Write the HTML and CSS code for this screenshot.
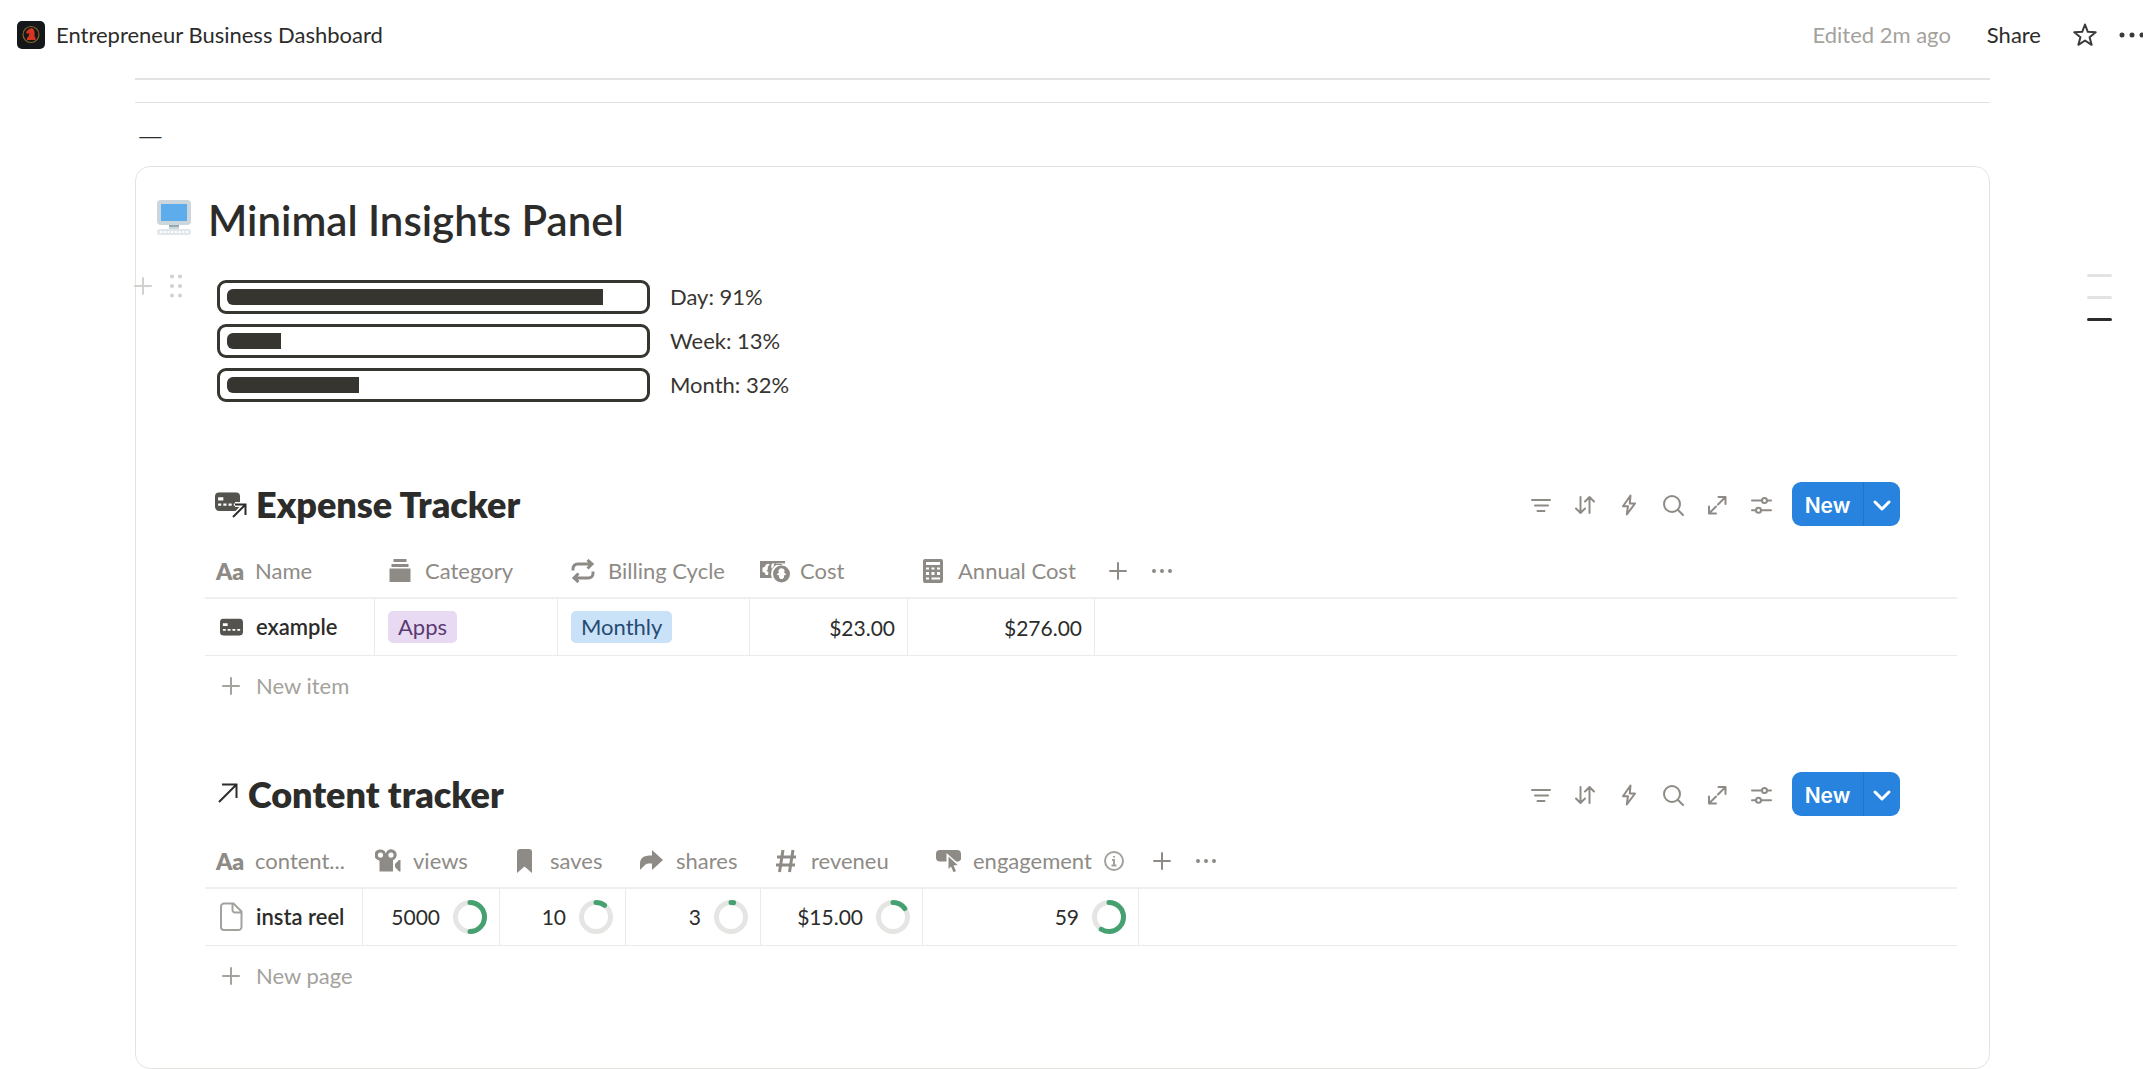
FILE: index.html
```html
<!DOCTYPE html>
<html lang="en">
<head>
  <meta charset="UTF-8" />
  <meta name="viewport" content="width=device-width, initial-scale=1.0"/>
  <title>Entrepreneur Business Dashboard</title>
  <link rel="stylesheet" href="styles.css">
</head>
<body>
  <svg class="sprite" aria-hidden="true">
    <symbol id="i-filter" viewBox="0 0 24 24"><path d="M3 7h18M6 12.500h13M8.500 18h7"/></symbol>
    <symbol id="i-sort" viewBox="0 0 24 24"><path d="M7.500 4v16M3 15.500l4.500 4.500 4.500-4.500M16.500 20V4M12 8.500L16.500 4l4.500 4.500"/></symbol>
    <symbol id="i-bolt" viewBox="0 0 24 24"><path d="M13.500 2.500L6 13.200h5L9.800 21.500 18 10.500h-5.200z"/></symbol>
    <symbol id="i-search" viewBox="0 0 24 24"><circle cx="11" cy="11" r="8"/><path d="M17 17l5 5"/></symbol>
    <symbol id="i-expand" viewBox="0 0 24 24"><path d="M13.500 4h7v7M20.500 4l-7.500 7.500M4 13.500v7h7M4 20.500l7-7"/></symbol>
    <symbol id="i-sliders" viewBox="0 0 24 24"><path d="M3 7.500h10M18 7.500h4M3 17.300h4M12 17.300h10"/><circle cx="15.500" cy="7.500" r="2.500"/><circle cx="9.500" cy="17.300" r="2.500"/></symbol>
    <symbol id="i-chevron" viewBox="0 0 20 20"><path d="M3 7l7 7 7-7"/></symbol>
    <symbol id="i-plus" viewBox="0 0 20 20"><path d="M10 2v16M2 10h16"/></symbol>
    <symbol id="i-dots" viewBox="0 0 22 20"><circle cx="3" cy="10" r="2"/><circle cx="11" cy="10" r="2"/><circle cx="19" cy="10" r="2"/></symbol>
    <symbol id="i-card" viewBox="0 0 24 18"><path fill-rule="evenodd" d="M4 0h16a4 4 0 0 1 4 4v10a4 4 0 0 1-4 4H4a4 4 0 0 1-4-4V4a4 4 0 0 1 4-4zM3 5v3h5V5zM3 11v2h3v-2zM8 11v2h3v-2zM13 11v2h3v-2zM18 11v2h3v-2z"/></symbol>
  </svg>

  <header class="topbar">
    <a class="page-link" href="#">
      <svg class="page-logo" viewBox="0 0 28 28" aria-hidden="true">
        <rect width="28" height="28" rx="5" fill="#14181a"/>
        <circle cx="14" cy="13.500" r="8" fill="none" stroke="#8a6420" stroke-width="1.200"/>
        <path d="M10 19v-2l1.500-1.500 1-3.500-2.500 1-1-2 2.500-2.500L14.500 7c3 1 3.500 4 3 8.500l1 1.500v2z" fill="#d8341f"/>
      </svg>
      Entrepreneur Business Dashboard
    </a>
    <div class="top-actions">
      <span class="edited">Edited 2m ago</span>
      <button class="share" type="button">Share</button>
      <button class="star" type="button" aria-label="Favorite">
        <svg viewBox="0 0 24 24"><path d="M12 1.500l2.800 7.300 7.900.4-6.100 5 2 7.600L12 17.500l-6.600 4.300 2-7.600-6.100-5 7.900-.4z"/></svg>
      </button>
      <button class="more" type="button" aria-label="More">
        <svg viewBox="0 0 26 20"><circle cx="5" cy="10" r="2.500"/><circle cx="15" cy="10" r="2.500"/><circle cx="25" cy="10" r="2.500"/></svg>
      </button>
    </div>
  </header>

  <div class="page">
    <main>
      <hr class="rule thick">
      <hr class="rule">
      <p class="dash">—</p>

      <section class="panel">
        <div class="handles">
          <button type="button" aria-label="Add block"><svg class="icon-plus" viewBox="0 0 20 20"><use href="#i-plus"/></svg></button>
          <button type="button" aria-label="Drag block">
            <svg class="icon-grip" viewBox="0 0 14 24"><circle cx="3" cy="2.500" r="2"/><circle cx="11" cy="2.500" r="2"/><circle cx="3" cy="12" r="2"/><circle cx="11" cy="12" r="2"/><circle cx="3" cy="21.500" r="2"/><circle cx="11" cy="21.500" r="2"/></svg>
          </button>
        </div>

        <h1 class="panel-title">
          <svg class="computer" viewBox="0 0 34 36" aria-hidden="true">
            <rect x="0" y="0" width="34" height="25" rx="4" fill="#ccd6dd"/>
            <rect x="4" y="4" width="26" height="17" fill="#5dadec"/>
            <rect x="12" y="25" width="10" height="3" fill="#9aaab4"/>
            <path d="M12 27h10v2H12z" fill="#ccd6dd"/>
            <rect x="0" y="29" width="34" height="6" rx="2.500" fill="#e1e8ed"/>
            <path d="M3 32h28" stroke="#fff" stroke-width="2" stroke-dasharray="2 1.700"/>
          </svg>
          Minimal Insights Panel
        </h1>

        <div class="content">
          <div class="bars">
            <div class="bar-row"><div class="bar"><div class="fill" style="width:91%"></div></div><span>Day: 91%</span></div>
            <div class="bar-row"><div class="bar"><div class="fill" style="width:13%"></div></div><span>Week: 13%</span></div>
            <div class="bar-row"><div class="bar"><div class="fill" style="width:32%"></div></div><span>Month: 32%</span></div>
          </div>

          <section class="tracker">
            <div class="tracker-head">
              <h2>
                <svg class="card-link" viewBox="0 0 32 28" aria-hidden="true">
                  <svg y="2" width="25" height="19" viewBox="0 0 24 18"><use href="#i-card"/></svg>
                  <path class="halo" d="M18 27L30 15M20 14.500h10.500V25"/>
                  <path class="arrow" d="M18 27L30 15M20 14.500h10.500V25"/>
                </svg>
                Expense Tracker
              </h2>
              <div class="tools">
                <button type="button" aria-label="Filter"><svg><use href="#i-filter"/></svg></button>
                <button type="button" aria-label="Sort"><svg><use href="#i-sort"/></svg></button>
                <button type="button" aria-label="Automations"><svg><use href="#i-bolt"/></svg></button>
                <button type="button" aria-label="Search"><svg><use href="#i-search"/></svg></button>
                <button type="button" aria-label="Open full page"><svg><use href="#i-expand"/></svg></button>
                <button type="button" aria-label="View settings"><svg><use href="#i-sliders"/></svg></button>
              </div>
              <div class="new-btn">
                <button class="new" type="button">New</button>
                <button class="new-menu" type="button" aria-label="New options"><svg><use href="#i-chevron"/></svg></button>
              </div>
            </div>

            <table class="expenses">
              <thead>
                <tr>
                  <th><div class="th"><span class="ico aa">Aa</span>Name</div></th>
                  <th><div class="th"><span class="ico"><svg viewBox="0 0 24 24"><path d="M5.500 0h13v3h-13zM3.500 5h17v3h-17zM1.500 9.500h21v13.500h-21z"/></svg></span>Category</div></th>
                  <th><div class="th"><span class="ico"><svg class="line" viewBox="0 0 24 24"><path d="M2 11.500V9.500a4.500 4.500 0 0 1 4.500-4.500H21M16.500 1L21 5l-4.500 4.500M22 12.500v2a4.500 4.500 0 0 1-4.500 4.500H3M7.500 14.500L3 19l4.500 4"/></svg></span>Billing Cycle</div></th>
                  <th>
                    <div class="th"><span class="ico"><svg class="wide" viewBox="0 0 30 24">
                      <path d="M0 2h25v17H0z"/>
                      <path class="cut" d="M7 5h3c-2 2-2.500 3.500-2.200 5.500L6.500 12l2 1-.5 3H5.500c0-2-1-3-3-3V8.500c2 0 3-1 3-2.500zM12 4.500h3L12 10l-1-2.500zM16 4.500h9v3h-9z"/>
                      <circle class="cut" cx="21.500" cy="15" r="10.500"/>
                      <path d="M14 5h11v1H14z"/>
                      <path class="cut" d="M22 5h3v3h-3z"/>
                      <circle cx="21.500" cy="15" r="8.500"/>
                      <path class="cut" d="M19 10.500a3.500 3.500 0 0 1 5 0c1 1.500.5 2.500 0 3l2.500 2-2.500 1v2l-1.500 1.500h-2L19 18.500v-2l-2.500-1 2.500-2c-1-1-.5-2 0-3z"/>
                    </svg></span>Cost</div>
                  </th>
                  <th><div class="th"><span class="ico"><svg viewBox="0 0 24 24"><path fill-rule="evenodd" d="M4 0h16a2 2 0 0 1 2 2v20a2 2 0 0 1-2 2H4a2 2 0 0 1-2-2V2a2 2 0 0 1 2-2zM5 3v3h14V3zM5 8.500v2h3v-2zM10.500 8.500v2h3v-2zM16 8.500v2h3v-2zM5 13v3h3v-3zM10.500 13v3h3v-3zM16 13v3h3v-3zM5 18.500v2h3v-2zM10.500 18.500v2H19v-2z"/></svg></span>Annual Cost</div></th>
                  <th>
                    <div class="th-end">
                      <button type="button" aria-label="Add property"><svg class="icon-plus"><use href="#i-plus"/></svg></button>
                      <button type="button" aria-label="More properties"><svg class="icon-dots"><use href="#i-dots"/></svg></button>
                    </div>
                  </th>
                </tr>
              </thead>
              <tbody>
                <tr>
                  <td><div class="name"><span class="ico"><svg class="card" viewBox="0 0 24 18"><use href="#i-card"/></svg></span><a href="#">example</a></div></td>
                  <td><span class="tag purple">Apps</span></td>
                  <td><span class="tag blue">Monthly</span></td>
                  <td class="num">$23.00</td>
                  <td class="num">$276.00</td>
                  <td></td>
                </tr>
              </tbody>
            </table>
            <button class="new-row" type="button"><span class="ico"><svg class="icon-plus"><use href="#i-plus"/></svg></span>New item</button>
          </section>

          <section class="tracker">
            <div class="tracker-head">
              <h2>
                <svg class="arrow-link" viewBox="0 0 24 24" aria-hidden="true"><path class="arrow" d="M4 20L21 3M7 2.500h14.500V16"/></svg>
                Content tracker
              </h2>
              <div class="tools">
                <button type="button" aria-label="Filter"><svg><use href="#i-filter"/></svg></button>
                <button type="button" aria-label="Sort"><svg><use href="#i-sort"/></svg></button>
                <button type="button" aria-label="Automations"><svg><use href="#i-bolt"/></svg></button>
                <button type="button" aria-label="Search"><svg><use href="#i-search"/></svg></button>
                <button type="button" aria-label="Open full page"><svg><use href="#i-expand"/></svg></button>
                <button type="button" aria-label="View settings"><svg><use href="#i-sliders"/></svg></button>
              </div>
              <div class="new-btn">
                <button class="new" type="button">New</button>
                <button class="new-menu" type="button" aria-label="New options"><svg><use href="#i-chevron"/></svg></button>
              </div>
            </div>

            <table class="posts">
              <thead>
                <tr>
                  <th><div class="th"><span class="ico aa">Aa</span>content...</div></th>
                  <th><div class="th"><span class="ico"><svg class="full" viewBox="0 0 26 24"><path fill-rule="evenodd" d="M5.500 0.500a5.500 5.500 0 0 1 5.300 4 5.500 5.500 0 1 1 7.200 6.500V22.500H4.500V11.500a5.500 5.500 0 0 1 1-11zM5.500 3.500a2.600 2.600 0 1 0 0 5.200 2.600 2.600 0 0 0 0-5.200zM16 3.500a2.600 2.600 0 1 0 0 5.200 2.600 2.600 0 0 0 0-5.200z"/><path d="M25.500 11v11.500H24L20 18v-3l4-4z"/></svg></span>views</div></th>
                  <th><div class="th"><span class="ico"><svg viewBox="0 0 24 24"><path d="M6.500 0h9.500a3 3 0 0 1 3 3v21l-7.500-6.500L4 24V3a3 3 0 0 1 2.500-3z"/></svg></span>saves</div></th>
                  <th><div class="th"><span class="ico"><svg viewBox="0 0 24 24"><path d="M13 1l11 10-11 10v-6.500c-4 0-5.500 0-7 1.500-1.500 1.200-3 3-4.500 4.500H1V15C1 9 4 6.500 13 6.500z"/></svg></span>shares</div></th>
                  <th><div class="th"><span class="ico"><svg class="line" viewBox="0 0 24 24"><path d="M9 1L5.500 23M19 1l-3.500 22M3 8h19M2 16h19"/></svg></span>reveneu</div></th>
                  <th>
                    <div class="th"><span class="ico"><svg class="full" viewBox="0 0 26 24"><rect x="1" y="1" width="25" height="11.500" rx="4"/><path class="cut" d="M11.500 4l14.500 13-4 9H11.500z"/><path d="M18 8h8a4 4 0 0 1-3.500 4.500z"/><path d="M13.500 7.500l9 8.500-4 .5 2.500 5.500-2.500 1.200-2.500-5.700-2.500 2.500z"/></svg></span>engagement
                      <svg class="info" viewBox="0 0 20 20"><circle cx="10" cy="10" r="9"/><path d="M10 5v1.500M8 9h2v5.500M7.500 14.500h5"/></svg>
                    </div>
                  </th>
                  <th>
                    <div class="th-end">
                      <button type="button" aria-label="Add property"><svg class="icon-plus"><use href="#i-plus"/></svg></button>
                      <button type="button" aria-label="More properties"><svg class="icon-dots"><use href="#i-dots"/></svg></button>
                    </div>
                  </th>
                </tr>
              </thead>
              <tbody>
                <tr>
                  <td><div class="name"><span class="ico"><svg class="file" viewBox="0 0 24 30"><path d="M5 1.500h9.500l8 8V25a3 3 0 0 1-3 3H5a3 3 0 0 1-3-3V4.500a3 3 0 0 1 3-3zM13.500 2v6a2.500 2.500 0 0 0 2.500 2.500h6"/></svg></span><a href="#">insta reel</a></div></td>
                  <td><div class="ring-cell">5000<svg class="ring" viewBox="0 0 34 34"><circle cx="17" cy="17" r="14.500"/><circle class="value" cx="17" cy="17" r="14.500" pathLength="100" stroke-dasharray="50 100"/></svg></div></td>
                  <td><div class="ring-cell">10<svg class="ring" viewBox="0 0 34 34"><circle cx="17" cy="17" r="14.500"/><circle class="value" cx="17" cy="17" r="14.500" pathLength="100" stroke-dasharray="10 100"/></svg></div></td>
                  <td><div class="ring-cell">3<svg class="ring" viewBox="0 0 34 34"><circle cx="17" cy="17" r="14.500"/><circle class="value" cx="17" cy="17" r="14.500" pathLength="100" stroke-dasharray="3 100"/></svg></div></td>
                  <td><div class="ring-cell">$15.00<svg class="ring" viewBox="0 0 34 34"><circle cx="17" cy="17" r="14.500"/><circle class="value" cx="17" cy="17" r="14.500" pathLength="100" stroke-dasharray="15 100"/></svg></div></td>
                  <td><div class="ring-cell">59<svg class="ring" viewBox="0 0 34 34"><circle cx="17" cy="17" r="14.500"/><circle class="value" cx="17" cy="17" r="14.500" pathLength="100" stroke-dasharray="59 100"/></svg></div></td>
                  <td></td>
                </tr>
              </tbody>
            </table>
            <button class="new-row" type="button"><span class="ico"><svg class="icon-plus"><use href="#i-plus"/></svg></span>New page</button>
          </section>
        </div>
      </section>
    </main>

    <nav class="toc" aria-label="Table of contents">
      <a href="#" aria-label="Section 1"></a>
      <a href="#" aria-label="Section 2"></a>
      <a class="active" href="#" aria-label="Section 3"></a>
    </nav>
  </div>
</body>
</html>
```
FILE: styles.css
```css
* {
  box-sizing: border-box;
}
body {
  margin: 0;
  font-family: Lato, "Open Sans", sans-serif;
  font-size: 22px;
  line-height: 32px;
  color: #2c2c2b;
  background: #fff;
}
a {
  color: inherit;
  text-decoration: none;
}
button {
  display: flex;
  align-items: center;
  justify-content: center;
  padding: 0;
  border: 0;
  background: none;
  font: inherit;
  color: inherit;
  cursor: pointer;
}
svg {
  display: block;
  flex: none;
}
h1, h2, p {
  margin: 0;
}
.sprite {
  position: absolute;
  width: 0;
  height: 0;
}

/* top bar */
.topbar {
  display: flex;
  align-items: center;
  justify-content: space-between;
  height: 70px;
  padding-left: 17px;
}
.page-link {
  display: flex;
  align-items: center;
  gap: 11px;
}
.page-logo {
  width: 28px;
  height: 28px;
}
.top-actions {
  display: flex;
  align-items: center;
}
.edited {
  color: #a4a29d;
  margin-right: 36px;
}
.share {
  margin-right: 32px;
}
.star {
  margin-right: 20px;
}
.star svg {
  width: 24px;
  height: 24px;
  fill: none;
  stroke: #3b3a38;
  stroke-width: 2;
  stroke-linejoin: round;
}
.more svg {
  width: 26px;
  height: 20px;
  fill: #3b3a38;
}

/* page */
.page {
  display: grid;
  grid-template-columns: minmax(0, 1fr) 153px;
  padding: 8px 0 0 135px;
}
.rule {
  height: 1px;
  margin: 0;
  border: 0;
  background: #e3e3e1;
}
.rule.thick {
  height: 2px;
  margin-bottom: 22px;
}
.dash {
  padding: 15px 2px 16px;
  font-size: 34px;
  font-weight: 300;
}
.panel {
  position: relative;
  padding: 25px 32px 62px 21px;
  border: 1px solid #e3e3e1;
  border-radius: 15px;
}
.panel-title {
  display: flex;
  align-items: center;
  gap: 17px;
  font-size: 42px;
  font-weight: 600;
  line-height: 56px;
}
.computer {
  width: 34px;
  height: 36px;
  margin-bottom: 4px;
}
.handles {
  position: absolute;
  left: -3px;
  top: 107px;
  display: flex;
  align-items: center;
  gap: 16px;
  color: #d3d1cd;
}
.content {
  padding-left: 48px;
}

/* progress bars */
.bars {
  display: flex;
  flex-direction: column;
  gap: 10px;
  padding: 32px 0 0 12px;
}
.bar-row {
  display: flex;
  align-items: center;
  gap: 20px;
  height: 34px;
  color: #373530;
}
.bar {
  width: 433px;
  padding: 6px 7px;
  border: 3px solid #373530;
  border-radius: 9px;
}
.fill {
  height: 16px;
  background: #373530;
  border-radius: 6px 0 0 6px;
}

/* trackers */
.tracker {
  padding-top: 80px;
}
.tracker + .tracker {
  padding-top: 56px;
}
.tracker-head {
  display: flex;
  align-items: center;
  height: 44px;
  margin: 0 57px 22px 10px;
}
h2 {
  display: flex;
  align-items: center;
  gap: 9px;
  margin-right: auto;
  font-size: 36px;
  font-weight: 800;
  line-height: 44px;
}
.card-link {
  width: 32px;
  height: 28px;
  fill: #55534e;
}
.arrow-link {
  width: 24px;
  height: 24px;
}
.arrow, .halo {
  fill: none;
  stroke: #2c2c2b;
  stroke-width: 2;
}
.halo {
  stroke: #fff;
  stroke-width: 5;
}
.tools {
  display: flex;
  padding-top: 1px;
  margin-right: 9px;
}
.tools button {
  width: 44px;
  height: 44px;
}
.tools svg {
  width: 24px;
  height: 24px;
  fill: none;
  stroke: #8e8b86;
  stroke-width: 2;
  stroke-linecap: round;
  stroke-linejoin: round;
}
.new-btn {
  display: flex;
  height: 44px;
  border-radius: 9px;
  overflow: hidden;
  background: #2783de;
  color: #fff;
}
.new {
  width: 72px;
  padding-top: 3px;
  border-right: 1px solid #2474c6;
  font-family: Inter, sans-serif;
  font-size: 21px;
  font-weight: 600;
}
.new-menu {
  width: 36px;
  padding-top: 2px;
}
.new-menu svg {
  width: 20px;
  height: 20px;
  fill: none;
  stroke: #fff;
  stroke-width: 3;
  stroke-linecap: round;
  stroke-linejoin: round;
}

table {
  width: 100%;
  table-layout: fixed;
  border-collapse: separate;
  border-spacing: 0;
}
th {
  height: 51px;
  padding: 0 0 3px;
  border-bottom: 2px solid #f0efee;
  font-weight: 400;
  color: #8e8b86;
}
td {
  height: 57px;
  padding: 0 12px 0 13px;
  border-bottom: 1px solid #ebebea;
  border-right: 1px solid #ebebea;
}
td:last-child {
  border-right: 0;
}
td:first-child {
  padding-right: 0;
}
.expenses th:nth-child(1) { width: 170px; }
.expenses th:nth-child(2) { width: 183px; }
.expenses th:nth-child(3) { width: 192px; }
.expenses th:nth-child(4) { width: 158px; }
.expenses th:nth-child(5) { width: 187px; }
.posts th:nth-child(1) { width: 158px; }
.posts th:nth-child(2) { width: 137px; }
.posts th:nth-child(3) { width: 126px; }
.posts th:nth-child(4) { width: 135px; }
.posts th:nth-child(5) { width: 162px; }
.posts th:nth-child(6) { width: 216px; }

.th, .name, .new-row {
  display: flex;
  align-items: center;
  gap: 12px;
  white-space: nowrap;
}
.th {
  padding-left: 12px;
}
.ico {
  display: flex;
  align-items: center;
  justify-content: center;
  width: 26px;
}
.ico svg {
  width: 24px;
  height: 24px;
  fill: #8e8b86;
}
.ico svg.full {
  width: 26px;
}
.ico svg.wide {
  width: 30px;
}
.ico svg.line {
  fill: none;
  stroke: #8e8b86;
  stroke-width: 3;
}
.ico svg.card {
  width: 23px;
  height: 18px;
  fill: #55534e;
}
.ico svg.file {
  height: 30px;
  fill: none;
  stroke: #a4a29d;
  stroke-width: 2;
}
.cut {
  fill: #fff;
}
.aa {
  font-size: 23px;
  font-weight: 800;
}
.info {
  width: 20px;
  height: 20px;
  fill: none;
  stroke: #a4a29d;
  stroke-width: 2;
}
.th-end {
  display: flex;
  padding-left: 1px;
}
.th-end button {
  width: 44px;
  height: 44px;
}
svg.icon-plus {
  width: 20px;
  height: 20px;
  fill: none;
  stroke: currentColor;
  stroke-width: 2;
  stroke-linecap: round;
}
.icon-grip {
  width: 14px;
  height: 24px;
  fill: currentColor;
}
.icon-dots {
  width: 22px;
  height: 20px;
  fill: #8e8b86;
}
.name {
  font-weight: 600;
}
.tag {
  display: inline-block;
  padding: 0 10px;
  border-radius: 5px;
}
.purple {
  background: #e8daf2;
  color: #5a3a72;
}
.blue {
  background: #cae2f8;
  color: #264a72;
}
.num, .ring-cell {
  font-size: 21px;
}
.num {
  padding-top: 2px;
  text-align: right;
}
.ring-cell {
  display: flex;
  align-items: center;
  justify-content: flex-end;
  gap: 13px;
}
.ring {
  width: 34px;
  height: 34px;
  fill: none;
  stroke: #e5e5e3;
  stroke-width: 5;
  transform: rotate(-90deg);
}
.ring .value {
  stroke: #46a171;
  stroke-linecap: round;
}
.new-row {
  height: 60px;
  padding-left: 13px;
  color: #a4a29d;
}

/* outline on the right */
.toc {
  display: flex;
  flex-direction: column;
  gap: 19px;
  padding: 196px 31px 0 97px;
}
.toc a {
  height: 3px;
  border-radius: 2px;
  background: #e3e3e1;
}
.toc .active {
  background: #2c2c2b;
}
```
